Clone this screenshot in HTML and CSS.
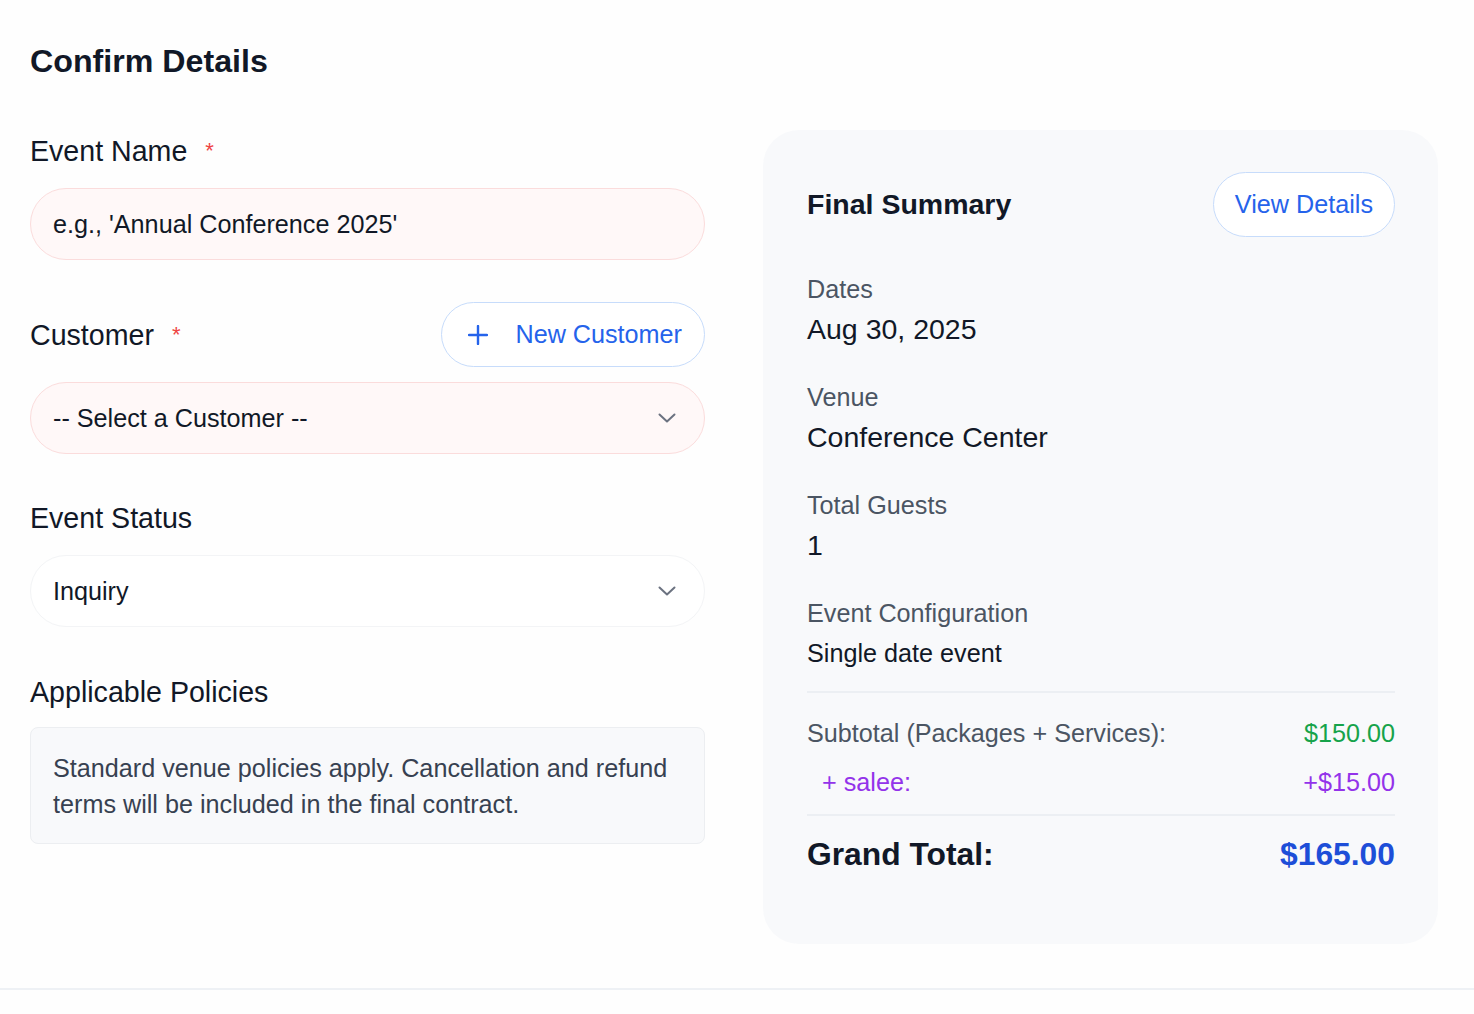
FILE: index.html
```html
<!DOCTYPE html>
<html lang="en">
<head>
<meta charset="utf-8">
<title>Confirm Details</title>
<link rel="stylesheet" href="styles.css">
</head>
<body>
<div class="page">
  <h1 class="title">Confirm Details</h1>
  <div class="columns">
    <div class="form">
      <div class="label label-first">Event Name <span class="req">*</span></div>
      <div class="field field-error"><span class="field-text">e.g., 'Annual Conference 2025'</span></div>

      <div class="label-row">
        <div class="label">Customer <span class="req">*</span></div>
        <button class="pill-btn new-btn" type="button">
          <svg class="plus" width="20" height="20" viewBox="0 0 20 20" aria-hidden="true"><path d="M10 1v18M1 10h18" stroke="#2563eb" stroke-width="2.4" stroke-linecap="round" fill="none"/></svg>
          <span>New Customer</span>
        </button>
      </div>
      <div class="field field-error select-field">
        <span class="field-text">-- Select a Customer --</span>
        <svg class="chev" width="18" height="10" viewBox="0 0 18 10" aria-hidden="true"><path d="M1.5 1.5l7.5 7 7.5-7" stroke="#6b7280" stroke-width="2" fill="none" stroke-linecap="round" stroke-linejoin="round"/></svg>
      </div>

      <div class="label label-gap">Event Status</div>
      <div class="field field-plain select-field">
        <span class="field-text">Inquiry</span>
        <svg class="chev" width="18" height="10" viewBox="0 0 18 10" aria-hidden="true"><path d="M1.5 1.5l7.5 7 7.5-7" stroke="#6b7280" stroke-width="2" fill="none" stroke-linecap="round" stroke-linejoin="round"/></svg>
      </div>

      <div class="label label-gap2">Applicable Policies</div>
      <div class="policy">Standard venue policies apply. Cancellation and refund terms will be included in the final contract.</div>
    </div>

    <div class="summary">
      <div class="summary-head">
        <h2 class="summary-title">Final Summary</h2>
        <button class="pill-btn view-btn" type="button">View Details</button>
      </div>
      <div class="item item-first">
        <div class="item-label">Dates</div>
        <div class="item-value">Aug 30, 2025</div>
      </div>
      <div class="item">
        <div class="item-label">Venue</div>
        <div class="item-value">Conference Center</div>
      </div>
      <div class="item">
        <div class="item-label">Total Guests</div>
        <div class="item-value">1</div>
      </div>
      <div class="item">
        <div class="item-label">Event Configuration</div>
        <div class="item-value small">Single date event</div>
      </div>
      <div class="divider"></div>
      <div class="row row-sub">
        <span class="row-label">Subtotal (Packages + Services):</span>
        <span class="green">$150.00</span>
      </div>
      <div class="row row-tax">
        <span class="purple indent">+ salee:</span>
        <span class="purple">+$15.00</span>
      </div>
      <div class="divider divider2"></div>
      <div class="row total">
        <span>Grand Total:</span>
        <span class="blue">$165.00</span>
      </div>
    </div>
  </div>
  <div class="footer-line"></div>
</div>
</body>
</html>
```

FILE: styles.css
```css
* { box-sizing: border-box; }
html, body { margin: 0; padding: 0; }
body {
  background: #fefefe;
  font-family: "Liberation Sans", Arial, sans-serif;
  color: #111827;
  font-size: 25.2px;
}
.page {
  padding-top: 39px;
}
.title {
  margin: 0 0 0 30px;
  font-size: 32.2px;
  line-height: 44px;
  font-weight: 700;
  color: #111827;
}
.columns {
  display: grid;
  grid-template-columns: 675px 675px;
  column-gap: 58px;
  margin: 47px 0 0 30px;
  align-items: start;
}
.form { display: flex; flex-direction: column; }
.label {
  font-size: 28.6px;
  line-height: 42px;
  color: #111827;
  white-space: nowrap;
}
.req { color: #ef4444; font-size: 22px; margin-left: 10px; vertical-align: 3px; }
.field {
  height: 72px;
  border-radius: 36px;
  border: 1.5px solid #e5e7eb;
  display: flex;
  align-items: center;
  padding: 0 28px 0 22px;
  font-size: 25.2px;
  color: #111827;
  white-space: nowrap;
}
.field-error { background: #fff8f8; border-color: #fbdcdc; }
.field-plain { background: #ffffff; border-color: #f3f4f6; }
.label-first + .field { margin-top: 16px; }
.select-field { justify-content: space-between; }
.chev { flex: none; }
.label-row {
  margin-top: 42px;
  display: flex;
  align-items: center;
  justify-content: space-between;
}
.label-row + .field { margin-top: 15px; }
.pill-btn {
  font-family: inherit;
  font-size: 25.2px;
  color: #2563eb;
  background: #ffffff;
  border: 1.5px solid #c7dcfb;
  border-radius: 33px;
  height: 65px;
  cursor: pointer;
  white-space: nowrap;
}
.new-btn {
  display: flex;
  align-items: center;
  gap: 27px;
  padding: 0 22px 0 26px;
}
.plus { flex: none; }
.label-gap { margin-top: 43px; }
.label-gap + .field { margin-top: 16px; }
.label-gap2 { margin-top: 44px; }
.policy {
  margin-top: 14px;
  background: #f8f9fb;
  border: 1.5px solid #eceef1;
  border-radius: 8px;
  padding: 22px 20px 21px 22px;
  font-size: 25.2px;
  line-height: 36px;
  color: #374151;
}
.summary {
  background: #f8f9fb;
  border-radius: 36px;
  padding: 42px 43px 68px 44px;
}
.summary-head {
  display: flex;
  align-items: center;
  justify-content: space-between;
  height: 65px;
}
.summary-title {
  margin: 0;
  font-size: 28.5px;
  font-weight: 700;
  color: #111827;
}
.view-btn {
  padding: 0 21px;
}
.item { margin-top: 28px; }
.item-first { margin-top: 33px; }
.item-label {
  font-size: 25.2px;
  line-height: 38px;
  color: #4b5563;
}
.item-value {
  font-size: 28.5px;
  line-height: 42px;
  color: #111827;
}
.item-value.small { font-size: 25.2px; }
.divider {
  height: 2px;
  background: #eceff3;
  margin-top: 17px;
}
.row {
  display: flex;
  justify-content: space-between;
  align-items: center;
  font-size: 25.2px;
  line-height: 38px;
}
.row-sub { margin-top: 21px; }
.row-label { color: #4b5563; }
.row-tax { margin-top: 11px; }
.divider2 { margin-top: 13px; }
.green { color: #16a34a; }
.purple { color: #9333ea; }
.indent { padding-left: 15px; }
.total {
  margin-top: 16px;
  font-size: 31.8px;
  line-height: 44px;
  font-weight: 700;
  color: #111827;
}
.blue { color: #1d4ed8; }
.footer-line {
  margin-top: 44px;
  height: 2px;
  background: #eef1f5;
}
```
